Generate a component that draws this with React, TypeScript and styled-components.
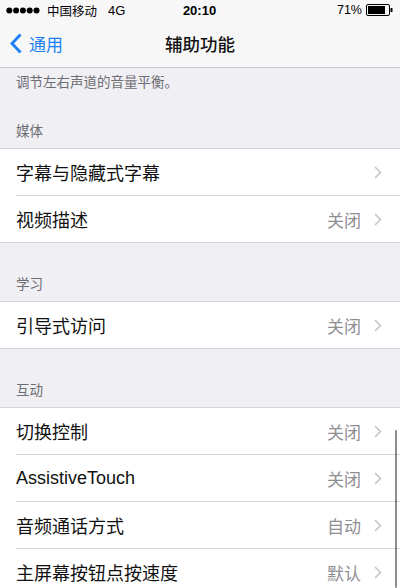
import React from 'react';
import styled, { createGlobalStyle } from 'styled-components';

const GlobalStyle = createGlobalStyle`
  html, body {
    margin: 0;
    padding: 0;
    background: #efeff4;
  }
  body {
    font-family: "Liberation Sans", "Noto Sans CJK SC", sans-serif;
    -webkit-font-smoothing: antialiased;
  }
`;

const Screen = styled.div`
  position: relative;
  width: 400px;
  height: 588px;
  overflow: hidden;
  background: #efeff4;
`;

const StatusBar = styled.div`
  height: 20px;
  padding: 0 7px 0 6px;
  display: grid;
  grid-template-columns: 1fr auto 1fr;
  align-items: center;
  background: #f7f7f8;
  font-size: 12.5px;
  color: #000;
`;

const Carrier = styled.div`
  display: flex;
  align-items: center;
  gap: 7px;
`;

const Network = styled.span`
  margin-left: 4px;
  font-size: 13px;
`;

const Clock = styled.div`
  font-weight: bold;
  font-size: 13px;
`;

const Battery = styled.div`
  display: flex;
  justify-content: flex-end;
  align-items: center;
  gap: 4px;
`;

const NavBar = styled.div`
  height: 47px;
  display: grid;
  grid-template-columns: 1fr auto 1fr;
  align-items: center;
  background: #f7f7f8;
  border-bottom: 1px solid #c9c9ce;
`;

const BackButton = styled.div`
  display: flex;
  align-items: center;
  gap: 7px;
  padding-left: 10px;
  color: #1a7ff3;
  font-size: 17px;
`;

const Title = styled.div`
  font-size: 17.5px;
  font-weight: 500;
  color: #111;
`;

const FooterNote = styled.div`
  padding: 6px 16px 0;
  line-height: 18px;
  font-size: 13.5px;
  color: #6d6d72;
`;

const SectionHeader = styled.div<{ $height: number }>`
  height: ${p => p.$height}px;
  box-sizing: border-box;
  display: flex;
  align-items: flex-end;
  padding: 0 16px 7px;
  line-height: 18px;
  font-size: 13.5px;
  color: #6d6d72;
`;

const Group = styled.div`
  background: #fff;
  border-top: 1px solid #d4d4d9;
  border-bottom: 1px solid #d4d4d9;
`;

const Row = styled.div`
  padding-left: 16px;
  &:not(:last-child) > div {
    border-bottom: 1px solid #d4d4d9;
  }
`;

const RowInner = styled.div`
  height: 46px;
  display: flex;
  align-items: center;
  padding-right: 18px;
`;

const Label = styled.span`
  flex: 1;
  font-size: 18px;
  color: #111;
`;

const Value = styled.span`
  font-size: 17px;
  color: #8e8e93;
  margin-right: 13px;
`;

const ScrollIndicator = styled.div`
  position: absolute;
  right: 3px;
  top: 430px;
  bottom: 0;
  width: 2.5px;
  border-radius: 2px;
  background: rgba(0, 0, 0, 0.45);
`;

const SignalDots = () => (
  <svg width="34" height="7" viewBox="0 0 34 7">
    {[0, 1, 2, 3, 4].map(i => (
      <circle key={i} cx={3.3 + i * 6.8} cy="3.5" r="3" fill="#000" />
    ))}
  </svg>
);

const Chevron = () => (
  <svg width="8" height="13" viewBox="0 0 8 13">
    <polyline points="1,1 6.5,6.5 1,12" fill="none" stroke="#c4c4c9" strokeWidth="1.6" />
  </svg>
);

const BackChevron = () => (
  <svg width="12" height="21" viewBox="0 0 12 21">
    <polyline points="10.5,1.5 2,10.5 10.5,19.5" fill="none" stroke="#1a7ff3" strokeWidth="2.8" />
  </svg>
);

const BatteryIcon = () => (
  <svg width="27" height="12" viewBox="0 0 27 12">
    <rect x="0.5" y="0.5" width="23" height="11" rx="1.5" fill="none" stroke="#000" strokeWidth="1" />
    <rect x="2" y="2" width="17" height="8" fill="#000" />
    <rect x="24.5" y="4" width="2" height="4" rx="0.5" fill="#000" />
  </svg>
);

interface Item {
  label: string;
  value?: string;
}

interface Section {
  title: string;
  height: number;
  items: Item[];
}

const sections: Section[] = [
  {
    title: '媒体',
    height: 56,
    items: [{ label: '字幕与隐藏式字幕' }, { label: '视频描述', value: '关闭' }],
  },
  {
    title: '学习',
    height: 58,
    items: [{ label: '引导式访问', value: '关闭' }],
  },
  {
    title: '互动',
    height: 58,
    items: [
      { label: '切换控制', value: '关闭' },
      { label: 'AssistiveTouch', value: '关闭' },
      { label: '音频通话方式', value: '自动' },
      { label: '主屏幕按钮点按速度', value: '默认' },
    ],
  },
];

export default function App() {
  return (
    <>
      <GlobalStyle />
      <Screen>
        <StatusBar>
          <Carrier>
            <SignalDots />
            <span>中国移动</span>
            <Network>4G</Network>
          </Carrier>
          <Clock>20:10</Clock>
          <Battery>
            <span>71%</span>
            <BatteryIcon />
          </Battery>
        </StatusBar>

        <NavBar>
          <BackButton>
            <BackChevron />
            <span>通用</span>
          </BackButton>
          <Title>辅助功能</Title>
          <div />
        </NavBar>

        <FooterNote>调节左右声道的音量平衡。</FooterNote>

        {sections.map(section => (
          <React.Fragment key={section.title}>
            <SectionHeader $height={section.height}>{section.title}</SectionHeader>
            <Group>
              {section.items.map(item => (
                <Row key={item.label}>
                  <RowInner>
                    <Label>{item.label}</Label>
                    {item.value && <Value>{item.value}</Value>}
                    <Chevron />
                  </RowInner>
                </Row>
              ))}
            </Group>
          </React.Fragment>
        ))}

        <ScrollIndicator />
      </Screen>
    </>
  );
}
